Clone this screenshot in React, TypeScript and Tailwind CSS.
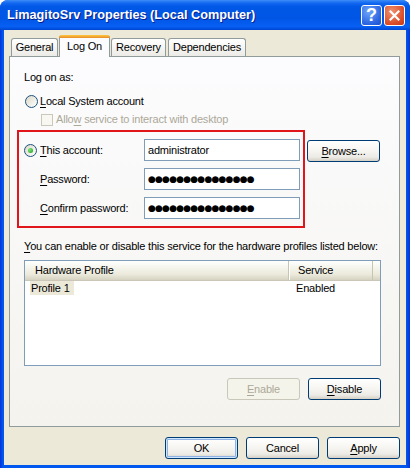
import type { ReactNode } from 'react';

const U = ({ children }: { children: ReactNode }) => (
  <span className="underline decoration-1 underline-offset-[2px]">{children}</span>
);

function Radio({ checked }: { checked?: boolean }) {
  return (
    <span className="w-[13px] h-[13px] shrink-0 rounded-full border border-[#1C5180] bg-[linear-gradient(135deg,#DCD9C8,#FFFFFF)] flex items-center justify-center">
      {checked && (
        <span className="w-[5px] h-[5px] rounded-full bg-[radial-gradient(circle_at_35%_35%,#7CE67C,#1A9A1A)]" />
      )}
    </span>
  );
}

function XpButton({
  children,
  disabled,
  isDefault,
}: {
  children: ReactNode;
  disabled?: boolean;
  isDefault?: boolean;
}) {
  if (disabled) {
    return (
      <button className="w-[73px] h-[22px] rounded-[3px] border border-[#C9C7BA] bg-[#F5F4EA] text-[#ACA899] flex items-center justify-center">
        {children}
      </button>
    );
  }
  return (
    <button
      className={
        isDefault
          ? 'w-[73px] h-[22px] rounded-[3px] border border-[#003C74] bg-[linear-gradient(180deg,#FFFFFF_0%,#F7F6F2_45%,#ECEBE6_80%,#D6D0C5_100%)] shadow-[inset_0_0_0_1px_#CEE7FF,inset_0_0_0_2px_#8DB2E3] flex items-center justify-center'
          : 'w-[73px] h-[22px] rounded-[3px] border border-[#003C74] bg-[linear-gradient(180deg,#FFFFFF_0%,#F7F6F2_45%,#ECEBE6_80%,#D6D0C5_100%)] flex items-center justify-center'
      }
    >
      {children}
    </button>
  );
}

function TextBox({ children }: { children: ReactNode }) {
  return (
    <div className="w-[156px] h-[22px] border border-[#7F9DB9] bg-white pl-[3px] flex items-center">
      {children}
    </div>
  );
}

const Dots = () => (
  <span className="font-['DejaVu_Sans',sans-serif] text-[9px] tracking-[-0.8px]">●●●●●●●●●●●●●●●</span>
);

export default function App() {
  return (
    <div className="w-[410px] h-[468px] flex flex-col rounded-t-[8px] bg-[linear-gradient(90deg,#0831D9,#0058EE_3px,#0058EE_406px,#0831D9)] font-['Liberation_Sans',Arial,sans-serif] text-[11px] tracking-[-0.2px] leading-[13px] text-black select-none">
      {/* title bar */}
      <div className="h-[30px] shrink-0 flex items-center pl-[7px] pr-[5px] rounded-t-[8px] bg-[linear-gradient(180deg,#3D8DF7_0%,#1468F0_10%,#0058E6_22%,#0055E5_60%,#0760F4_88%,#0046D0_100%)]">
        <span className="text-white font-bold text-[12.7px] tracking-normal [text-shadow:1px_1px_#0A1E8C]">
          LimagitoSrv Properties (Local Computer)
        </span>
        <div className="ml-auto flex gap-[2px]">
          <div className="w-[21px] h-[21px] rounded-[3px] border border-white bg-[radial-gradient(circle_at_35%_30%,#6FA6FA,#2963E0_70%,#1B4FCC)] flex items-center justify-center text-white font-bold text-[18px] tracking-normal leading-none">
            ?
          </div>
          <div className="w-[21px] h-[21px] rounded-[3px] border border-white bg-[radial-gradient(circle_at_35%_30%,#F0906E,#DA4A25_70%,#C23A18)] flex items-center justify-center">
            <svg width="11" height="11" viewBox="0 0 11 11">
              <path d="M1.5 1.5 L9.5 9.5 M9.5 1.5 L1.5 9.5" stroke="white" strokeWidth="2.2" strokeLinecap="square" />
            </svg>
          </div>
        </div>
      </div>

      {/* body */}
      <div className="flex-1 mx-[4px] mb-[3px] bg-[#ECE9D8] flex flex-col pl-[5px] pr-[6px] pt-[5px]">
        {/* tabs */}
        <div className="h-[21px] flex items-end pl-[2px] gap-[1px]">
          <div className="w-[47px] h-[18px] rounded-t-[3px] border-x border-t border-[#919B9C] bg-[linear-gradient(180deg,#FFFFFF,#ECEBE6)] flex items-center justify-center">
            General
          </div>
          <div className="relative z-10 -mb-px w-[51px] h-[22px] rounded-t-[3px] border-x border-[#919B9C] bg-[#FCFCFE] flex flex-col">
            <div className="h-[3px] -mx-px rounded-t-[3px] bg-[linear-gradient(180deg,#FFC83C,#E68B2C)]" />
            <div className="flex-1 flex items-center justify-center pb-[2px]">Log On</div>
          </div>
          <div className="w-[55px] h-[18px] rounded-t-[3px] border-x border-t border-[#919B9C] bg-[linear-gradient(180deg,#FFFFFF,#ECEBE6)] flex items-center justify-center">
            Recovery
          </div>
          <div className="ml-[1px] w-[78px] h-[18px] rounded-t-[3px] border-x border-t border-[#919B9C] bg-[linear-gradient(180deg,#FFFFFF,#ECEBE6)] flex items-center justify-center">
            Dependencies
          </div>
        </div>

        {/* tab panel */}
        <div className="h-[371px] border border-[#919B9C] bg-[linear-gradient(180deg,#FCFCFE,#F4F3EE)] pl-[14px] pr-[18px] pt-[14px] flex flex-col">
          <div className="h-[13px]">Log on as:</div>

          <div className="mt-[11px] h-[13px] flex items-center gap-[3px] pl-px">
            <Radio />
            <span className="-ml-px">
              <U>L</U>ocal System account
            </span>
          </div>

          <div className="mt-[5px] h-[13px] pl-[17px] flex items-center gap-[3px] text-[#ACA899]">
            <span className="w-[12px] h-[12px] border border-[#CAC8BB] bg-[#F8F7F2]" />
            <span>
              Allo<U>w</U> service to interact with desktop
            </span>
          </div>

          <div className="mt-[4px] -ml-[7px] flex items-start">
            <div className="w-[288px] border-2 border-[#E0161B] pl-[5px] pt-[7px] pb-[7px] flex flex-col gap-[7px]">
              <div className="h-[22px] flex items-center">
                <Radio checked />
                <span className="ml-[3px] w-[104px]">
                  <U>T</U>his account:
                </span>
                <TextBox>administrator</TextBox>
              </div>
              <div className="h-[22px] flex items-center">
                <span className="w-[13px]" />
                <span className="ml-[3px] w-[104px]">
                  <U>P</U>assword:
                </span>
                <TextBox>
                  <Dots />
                </TextBox>
              </div>
              <div className="h-[22px] flex items-center">
                <span className="w-[13px]" />
                <span className="ml-[3px] w-[104px]">
                  <U>C</U>onfirm password:
                </span>
                <TextBox>
                  <Dots />
                </TextBox>
              </div>
            </div>
            <div className="ml-[2px] mt-[10px]">
              <XpButton>
                <U>B</U>rowse...
              </XpButton>
            </div>
          </div>

          <div className="mt-[12px] h-[13px] whitespace-nowrap">
            <U>Y</U>ou can enable or disable this service for the hardware profiles listed below:
          </div>

          <div className="mt-[7px] h-[106px] border border-[#7F9DB9] bg-white flex flex-col">
            <div className="h-[20px] flex bg-[linear-gradient(180deg,#FFFFFF,#EBEADB_70%,#D6D2C2)] border-b border-[#CBC7B8]">
              <div className="w-[264px] pl-[10px] flex items-center border-r border-[#C7C5B2]">Hardware Profile</div>
              <div className="w-[84px] pl-[8px] flex items-center border-r border-[#C7C5B2] border-l border-l-white">
                Service
              </div>
            </div>
            <div className="h-[14px] flex items-center">
              <div className="w-[271px] pl-[5px]">
                <span className="bg-[#ECE9D8] pl-[1px] pr-[4px] py-[1px]">Profile 1</span>
              </div>
              <span>Enabled</span>
            </div>
          </div>

          <div className="mt-[12px] flex justify-end gap-[8px]">
            <XpButton disabled>
              <U>E</U>nable
            </XpButton>
            <XpButton>
              <U>D</U>isable
            </XpButton>
          </div>
        </div>

        <div className="mt-[10px] flex justify-end gap-[8px]">
          <XpButton isDefault>OK</XpButton>
          <XpButton>Cancel</XpButton>
          <XpButton>
            <U>A</U>pply
          </XpButton>
        </div>
      </div>
    </div>
  );
}
